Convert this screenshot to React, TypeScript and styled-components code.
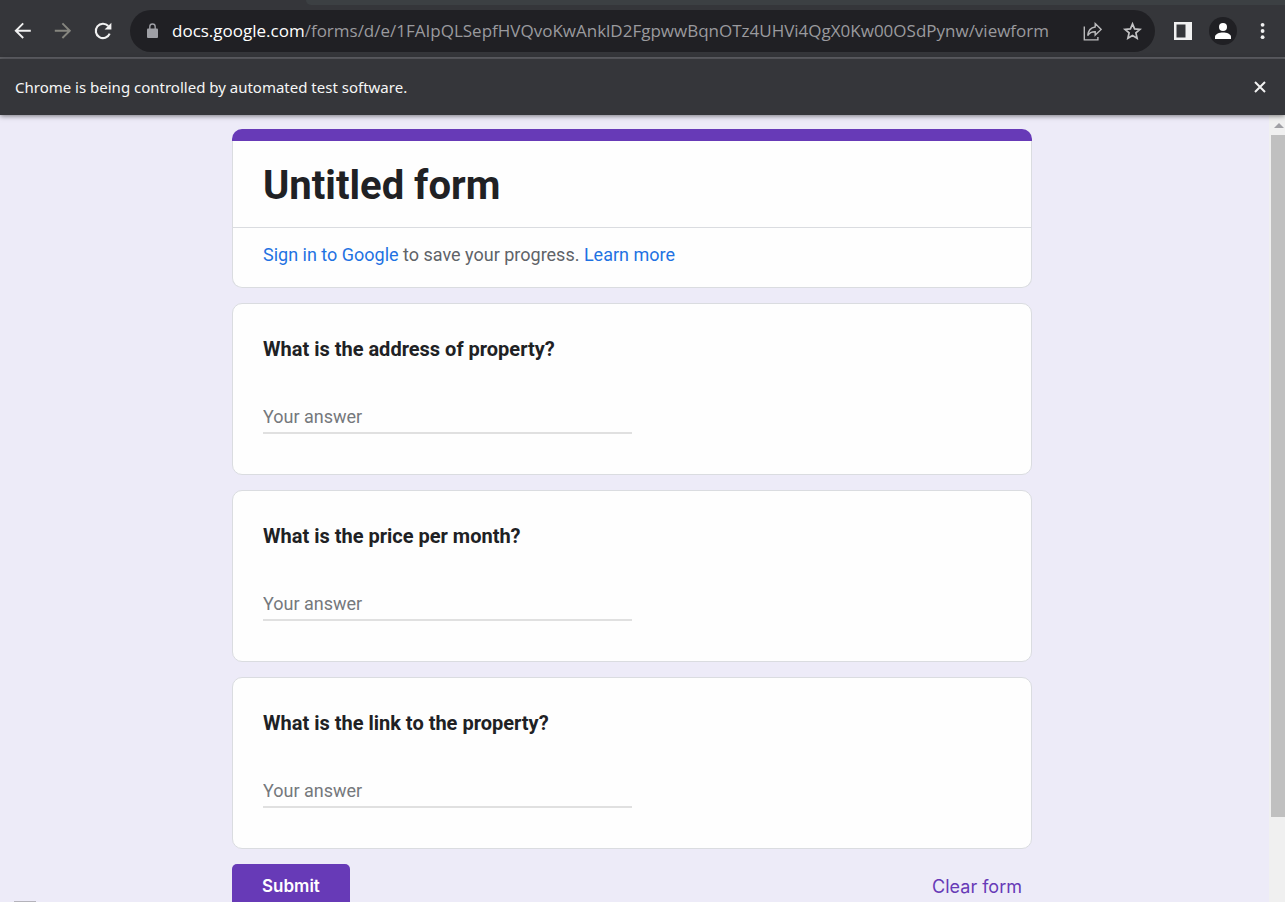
import React from "react";
import styled, { createGlobalStyle } from "styled-components";

const GlobalStyle = createGlobalStyle`
  * { box-sizing: border-box; }
  html, body, #root { height: 100%; }
  body { margin: 0; overflow: hidden; font-family: Roboto, "Liberation Sans", sans-serif; }
  button { font: inherit; border: 0; padding: 0; background: none; color: inherit; cursor: pointer; }
`;

const Window = styled.div`
  height: 100vh;
  display: flex;
  flex-direction: column;
  background: #edebf8;
`;

const TabStrip = styled.div`
  flex: none;
  height: 5px;
  display: flex;
  background: #35363a;
`;

const ActiveTab = styled.div`
  width: 306px;
`;

const InactiveTabs = styled.div`
  flex: 1;
  background: #3c4043;
  border-bottom-left-radius: 8px;
`;

const Toolbar = styled.header`
  flex: none;
  height: 54px;
  display: flex;
  align-items: center;
  padding: 0 7px 0 8px;
  background: #35363a;
  border-bottom: 2px solid #606166;
`;

const NavButtons = styled.nav`
  display: flex;
  gap: 10px;
  margin-right: 12px;
`;

const IconButton = styled.button<{ $color?: string }>`
  width: 30px;
  height: 30px;
  display: flex;
  align-items: center;
  justify-content: center;
  color: ${(p) => p.$color ?? "#f1f1f1"};

  svg { display: block; }
`;

const AddressBar = styled.div`
  flex: 1;
  min-width: 0;
  height: 42px;
  display: flex;
  align-items: center;
  gap: 10px;
  padding: 0 8px 0 16px;
  border-radius: 21px;
  background: #202024;
`;

const Url = styled.div`
  flex: 1;
  min-width: 0;
  padding-left: 3px;
  overflow: hidden;
  white-space: nowrap;
  font: 17px/24px "Open Sans", "Noto Sans", sans-serif;
  color: #9a9a9e;

  span { color: #fff; }
`;

const ToolbarActions = styled.div`
  display: flex;
  align-items: center;
  gap: 10px;
  margin-left: 13px;
`;

const Avatar = styled.button`
  width: 30px;
  height: 30px;
  display: flex;
  align-items: center;
  justify-content: center;
`;

const InfoBar = styled.div`
  flex: none;
  position: relative;
  height: 56px;
  display: flex;
  align-items: center;
  justify-content: space-between;
  padding: 0 10px 0 15px;
  background: #35363a;
  box-shadow: 0 1px 5px rgba(0, 0, 0, 0.5);
  color: #f6f6f6;
  font: 15px/24px "Noto Sans", "Open Sans", sans-serif;
`;

const Viewport = styled.div`
  flex: 1;
  min-height: 0;
  display: flex;
`;

const Page = styled.main`
  flex: 1;
  min-width: 0;
  overflow: hidden;
  padding: 14px 5px 0 0;
`;

const Form = styled.form`
  width: 100%;
  max-width: 800px;
  margin: 0 auto;
  display: flex;
  flex-direction: column;
  gap: 15px;
`;

const Card = styled.section`
  background: #fefefe;
  border: 1px solid #dadce0;
  border-radius: 10px;
`;

const HeaderStripe = styled.div`
  height: 12px;
  border-radius: 10px 10px 0 0;
  background: #673ab7;
`;

const HeaderBody = styled(Card)`
  border-top: 0;
  border-radius: 0 0 10px 10px;
`;

const Title = styled.h1`
  margin: 0;
  padding: 20px 30px 16px;
  font-size: 40px;
  line-height: 50px;
  font-weight: 700;
  color: #202124;
  border-bottom: 1px solid #dadce0;
`;

const SignIn = styled.p`
  margin: 0;
  padding: 15px 30px 20px;
  font-size: 18px;
  line-height: 24px;
  color: #5f6368;
`;

const Link = styled.a`
  color: #1f72e2;
  text-decoration: none;
`;

const QuestionCard = styled(Card)`
  display: flex;
  flex-direction: column;
  gap: 38px;
  padding: 30px 30px 40px;
`;

const Question = styled.label`
  font-size: 20px;
  line-height: 30px;
  font-weight: 700;
  color: #202124;
`;

const Answer = styled.input`
  width: 50%;
  height: 32px;
  padding: 0 0 2px;
  border: 0;
  border-bottom: 2px solid #e0e0e0;
  outline: 0;
  background: transparent;
  font: 18px/28px Roboto, sans-serif;
  color: #202124;

  &::placeholder { color: #75787c; opacity: 1; }
`;

const Actions = styled.div`
  display: flex;
  justify-content: space-between;
  height: 44px;
  font-family: Inter, sans-serif;
`;

const SubmitButton = styled.button`
  padding: 0 30px;
  border-radius: 5px;
  background: #673ab7;
  color: #fff;
  font-size: 17px;
  font-weight: 600;
`;

const ClearButton = styled.button`
  padding: 0 10px;
  color: #673ab7;
  font-size: 18px;
  font-weight: 400;
`;

const Scrollbar = styled.div`
  width: 16px;
  display: flex;
  flex-direction: column;
  padding-left: 2px;
  background: #f0f0f0;
`;

const ScrollArrow = styled.div`
  flex: none;
  height: 20px;
  display: flex;
  justify-content: flex-end;
  padding: 8px 1px 0 0;
`;

const ScrollThumb = styled.div`
  flex: 8;
  background: #c0c0c0;
`;

const ScrollRest = styled.div`
  flex: 1;
`;

const ReportTab = styled.div`
  position: fixed;
  left: 14px;
  bottom: 0;
  width: 22px;
  height: 1px;
  background: #b4b3bb;
`;

const ArrowIcon = ({ flip = false }: { flip?: boolean }) => (
  <svg width="18" height="18" viewBox="0 0 18 18" fill="none" stroke="currentColor" strokeWidth="1.9">
    <path d={flip ? "M0.8 8.7H15.6M8.4 1.4L15.8 8.7L8.4 16" : "M16.8 8.7H2M9.2 1.4L1.8 8.7L9.2 16"} />
  </svg>
);

const ReloadIcon = () => (
  <svg width="20" height="20" viewBox="0 0 20 20" fill="none">
    <path d="M16.7 12.6A7.2 7.2 0 1 1 15.3 5" stroke="currentColor" strokeWidth="2.1" />
    <path d="M18.4 1.7V8.4H11.6Z" fill="currentColor" />
  </svg>
);

const LockIcon = () => (
  <svg width="13" height="16" viewBox="0 0 13 16" fill="none">
    <rect x="1" y="5.5" width="11" height="9.5" rx="1" fill="#9fa0a6" />
    <path d="M3.8 6V3.7a2.7 2.7 0 0 1 5.4 0V6" stroke="#9fa0a6" strokeWidth="1.4" />
  </svg>
);

const ShareIcon = () => (
  <svg width="20" height="20" viewBox="0 0 20 20" fill="none" stroke="currentColor" strokeWidth="1.4">
    <path d="M2.3 5.5V18.9H15.9V16" />
    <path d="M13.2 2.6L19.2 8.4L13.2 14.1V10.8C9.7 10.7 7.4 11.9 5.7 14.6C6.1 10.1 8.5 6.7 13.2 6Z" />
  </svg>
);

const StarIcon = () => (
  <svg width="20" height="20" viewBox="0 0 20 20" fill="none" stroke="currentColor" strokeWidth="1.7">
    <path d="M10.5 2.9L12.6 7.9L18 8.4L13.9 11.9L15.1 17.2L10.5 14.4L5.9 17.2L7.1 11.9L3 8.4L8.4 7.9Z" />
  </svg>
);

const SidePanelIcon = () => (
  <svg width="18" height="18" viewBox="0 0 18 18">
    <path fill="currentColor" fillRule="evenodd" d="M0 0H18V18H0ZM2.5 2.5V15.5H11.5V2.5Z" />
  </svg>
);

const ProfileIcon = () => (
  <svg width="28" height="28" viewBox="0 0 28 28">
    <circle cx="14" cy="14" r="14" fill="#202024" />
    <circle cx="14" cy="10" r="4" fill="#fff" />
    <path d="M6 22V19.8C6 16.8 10.5 15.4 14 15.4S22 16.8 22 19.8V22Z" fill="#fff" />
  </svg>
);

const MenuIcon = () => (
  <svg width="6" height="18" viewBox="0 0 6 18" fill="currentColor">
    <circle cx="2.6" cy="2.8" r="1.9" />
    <circle cx="2.6" cy="9" r="1.9" />
    <circle cx="2.6" cy="15.2" r="1.9" />
  </svg>
);

const CloseIcon = () => (
  <svg width="12" height="12" viewBox="0 0 12 12" stroke="currentColor" strokeWidth="2">
    <path d="M1 1L11 11M11 1L1 11" />
  </svg>
);

const questions = [
  { id: "address", text: "What is the address of property?" },
  { id: "price", text: "What is the price per month?" },
  { id: "link", text: "What is the link to the property?" },
];

export default function App() {
  return (
    <Window>
      <GlobalStyle />
      <TabStrip>
        <ActiveTab />
        <InactiveTabs />
      </TabStrip>
      <Toolbar>
        <NavButtons>
          <IconButton aria-label="Back"><ArrowIcon /></IconButton>
          <IconButton aria-label="Forward" $color="#86867f"><ArrowIcon flip /></IconButton>
          <IconButton aria-label="Reload"><ReloadIcon /></IconButton>
        </NavButtons>
        <AddressBar>
          <LockIcon />
          <Url>
            <span>docs.google.com</span>/forms/d/e/1FAIpQLSepfHVQvoKwAnklD2FgpwwBqnOTz4UHVi4QgX0Kw00OSdPynw/viewform
          </Url>
          <IconButton aria-label="Share" $color="#b9b9bb"><ShareIcon /></IconButton>
          <IconButton aria-label="Bookmark" $color="#c3c3c5"><StarIcon /></IconButton>
        </AddressBar>
        <ToolbarActions>
          <IconButton aria-label="Side panel"><SidePanelIcon /></IconButton>
          <Avatar aria-label="Profile"><ProfileIcon /></Avatar>
          <IconButton aria-label="Menu"><MenuIcon /></IconButton>
        </ToolbarActions>
      </Toolbar>
      <InfoBar>
        Chrome is being controlled by automated test software.
        <IconButton aria-label="Close"><CloseIcon /></IconButton>
      </InfoBar>
      <Viewport>
        <Page>
          <Form onSubmit={(e) => e.preventDefault()}>
            <header>
              <HeaderStripe />
              <HeaderBody>
                <Title>Untitled form</Title>
                <SignIn>
                  <Link href="#signin">Sign in to Google</Link> to save your progress. <Link href="#more">Learn more</Link>
                </SignIn>
              </HeaderBody>
            </header>
            {questions.map((q) => (
              <QuestionCard key={q.id}>
                <Question htmlFor={q.id}>{q.text}</Question>
                <Answer id={q.id} type="text" placeholder="Your answer" />
              </QuestionCard>
            ))}
            <Actions>
              <SubmitButton type="submit">Submit</SubmitButton>
              <ClearButton type="reset">Clear form</ClearButton>
            </Actions>
          </Form>
        </Page>
        <Scrollbar>
          <ScrollArrow>
            <svg width="10" height="6" viewBox="0 0 10 6"><path d="M0 5L5 0L10 5Z" fill="#a0a0a5" /></svg>
          </ScrollArrow>
          <ScrollThumb />
          <ScrollRest />
        </Scrollbar>
      </Viewport>
      <ReportTab />
    </Window>
  );
}
